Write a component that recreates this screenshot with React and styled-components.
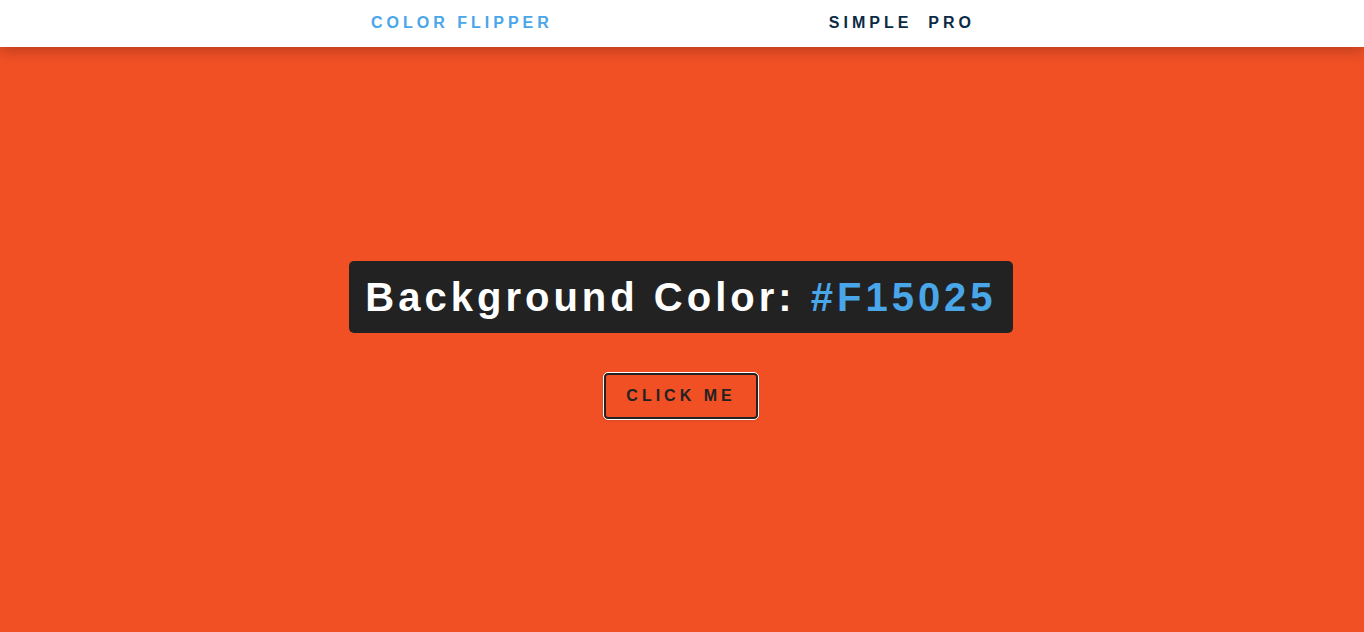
import React, { useState } from 'react';
import styled, { createGlobalStyle } from 'styled-components';

const colors = ['#F15025', '#49A6E9', '#2ECC71', '#8E44AD', '#F1C40F'];

export default function App() {
    const [color, setColor] = useState(colors[0]);

    const flip = () => {
        const next = colors[Math.floor(Math.random() * colors.length)];
        setColor(next);
    };

    return (
        <>
            <GlobalStyle />
            <Page style={{ background: color }}>
                <Nav>
                    <NavCenter>
                        <Brand>Color Flipper</Brand>
                        <NavLinks>
                            <NavLink href="#">simple</NavLink>
                            <NavLink href="#">pro</NavLink>
                        </NavLinks>
                    </NavCenter>
                </Nav>

                <Main>
                    <Heading>
                        Background Color: <ColorValue>{color}</ColorValue>
                    </Heading>
                    <HeroButton onClick={flip}>click me</HeroButton>
                </Main>
            </Page>
        </>
    );
}

const GlobalStyle = createGlobalStyle`
    * {
        margin: 0;
        padding: 0;
        box-sizing: border-box;
    }

    html, body, #root {
        height: 100%;
    }

    body {
        font-family: "Liberation Sans", Arial, sans-serif;
        color: #222;
        overflow: hidden;
    }
`;

const Page = styled.div`
    min-height: 100%;
    display: flex;
    flex-direction: column;
`;

const Nav = styled.nav`
    background: #fff;
    height: 47px;
    box-shadow: 0 5px 12px rgba(0, 0, 0, 0.2);
    position: relative;
    z-index: 1;
`;

const NavCenter = styled.div`
    width: 90vw;
    max-width: 620px;
    height: 100%;
    margin: 0 auto;
    padding-bottom: 2px;
    display: flex;
    align-items: center;
    justify-content: space-between;
    transform: translateX(-1px);
`;

const Brand = styled.h4`
    color: #49a6e9;
    font-size: 16px;
    font-weight: 700;
    letter-spacing: 4px;
    text-transform: uppercase;
`;

const NavLinks = styled.div`
    display: flex;
`;

const NavLink = styled.a`
    color: #0b2b45;
    font-size: 16px;
    font-weight: 700;
    letter-spacing: 4px;
    text-transform: uppercase;
    text-decoration: none;
    margin-right: 16px;
`;

const Main = styled.main`
    flex: 1;
    display: flex;
    flex-direction: column;
    align-items: center;
    justify-content: center;
    padding-right: 2px;
`;

const Heading = styled.h2`
    background: #222;
    color: #fff;
    font-size: 40px;
    line-height: 1;
    letter-spacing: 4px;
    padding: 16px;
    border-radius: 5px;
    margin-bottom: 40px;
`;

const ColorValue = styled.span`
    color: #49a6e9;
`;

const HeroButton = styled.button`
    font-family: "Liberation Sans", Arial, sans-serif;
    text-transform: uppercase;
    background: transparent;
    color: #222;
    letter-spacing: 4px;
    font-weight: 700;
    font-size: 16px;
    line-height: normal;
    border: 2px solid #222;
    outline: 1px solid #fff;
    border-radius: 4px;
    padding: 12px 20px;
    cursor: pointer;
    box-shadow: 0 1px 3px rgba(0, 0, 0, 0.2);
`;
